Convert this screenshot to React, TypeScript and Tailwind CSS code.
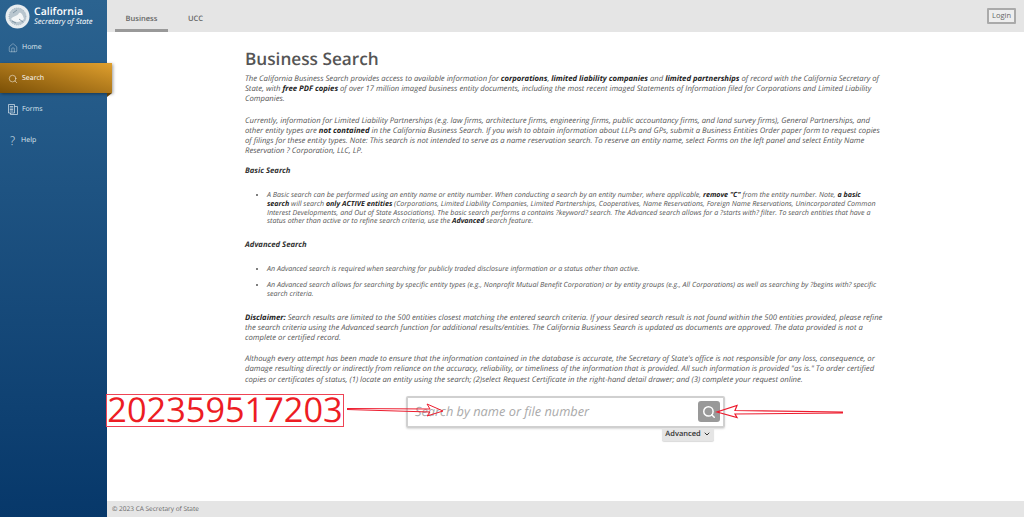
import { ChevronDown, Home, Search } from 'lucide-react'

const App = () => {
  return (
    <div className="relative flex h-[517px] w-[1024px] overflow-hidden bg-white font-['Open_Sans',sans-serif] text-[#555] antialiased [text-rendering:geometricPrecision]">
      {/* Sidebar */}
      <aside className="relative z-10 flex w-[107px] shrink-0 flex-col bg-gradient-to-b from-[#2b6390] to-[#07386a]">
        <div className="flex h-[32px] items-center gap-[4px] pl-[5px]">
          <Seal />
          <div className="pt-[2px] text-white">
            <div className="text-[10.5px] leading-[11px] font-semibold">California</div>
            <div className="text-[7.6px] leading-[9px] italic">Secretary of State</div>
          </div>
        </div>
        <nav className="flex flex-col text-[7px] text-[#dfe8ef]">
          <div className="flex h-[31px] items-center gap-[4px] pt-[1px] pl-[8px]">
            <Home size={10} strokeWidth={1} />
            <span className="pt-[1px]">Home</span>
          </div>
          <div className="relative flex h-[30px] w-[112px] items-center gap-[4px] bg-gradient-to-tr from-[#7b5006] to-[#e0a02e] pt-[1px] pl-[8px] text-white shadow-[1px_1px_3px_rgba(0,0,0,0.4)]">
            <Search size={10} strokeWidth={1.2} />
            <span className="pt-[1px]">Search</span>
            <div className="absolute top-full right-0 h-0 w-0 border-t-[4px] border-r-[5px] border-t-[#5e3d05] border-r-transparent" />
          </div>
          <div className="flex h-[32px] items-center gap-[4px] pt-[1px] pl-[8px]">
            <FormsIcon />
            <span className="pt-[1px]">Forms</span>
          </div>
          <div className="flex h-[30px] items-center gap-[6px] pt-[1px] pl-[10px]">
            <span className="text-[12px] font-light">?</span>
            <span className="pt-[1px]">Help</span>
          </div>
        </nav>
      </aside>

      {/* Main column */}
      <div className="flex min-w-0 flex-1 flex-col">
        <header className="flex h-[32px] items-stretch justify-between bg-[#e5e5e5] pr-[8px] text-[7.5px] font-semibold text-[#666]">
          <div className="ml-[8px] flex">
            <div className="flex w-[53px] items-center justify-center border-b-[3px] border-[#999] pt-[10px]">Business</div>
            <div className="ml-[20px] flex items-center pt-[8px]">UCC</div>
          </div>
          <div className="flex items-center">
            <button className="h-[16px] w-[29px] rounded-[1px] border-2 border-[#aaa] bg-[#eee] text-[7.5px] leading-none font-normal text-[#666]">Login</button>
          </div>
        </header>

        <main className="flex-1 pl-[138px]">
          <div className="w-[640px] pt-[16px]">
            <h1 className="text-[17.2px] leading-[24px] font-semibold text-[#555]">Business Search</h1>
            <p className="mt-[2px] text-[7.7px] leading-[10.2px] italic">
              The California Business Search provides access to available information for <b className="text-[#222]">corporations</b>, <b className="text-[#222]">limited liability companies</b> and <b className="text-[#222]">limited partnerships</b> of record with the California Secretary of State, with <b className="text-[#222]">free PDF copies</b> of over 17 million imaged business entity documents, including the most recent imaged Statements of Information filed for Corporations and Limited Liability Companies.
            </p>
            <p className="mt-[11px] text-[7.7px] leading-[10.2px] italic">
              Currently, information for Limited Liability Partnerships (e.g. law firms, architecture firms, engineering firms, public accountancy firms, and land survey firms), General Partnerships, and other entity types are <b className="text-[#222]">not contained</b> in the California Business Search. If you wish to obtain information about LLPs and GPs, submit a Business Entities Order paper form to request copies of filings for these entity types. Note: This search is not intended to serve as a name reservation search. To reserve an entity name, select Forms on the left panel and select Entity Name Reservation ? Corporation, LLC, LP.
            </p>
            <h2 className="mt-[10px] text-[7.7px] leading-[11px] font-bold text-[#333] italic">Basic Search</h2>
            <ul className="mt-[14px] list-disc pr-[3px] pl-[22px] text-[7.1px] leading-[8.6px] italic">
              <li>
                A Basic search can be performed using an entity name or entity number. When conducting a search by an entity number, where applicable, <b className="text-[#222]">remove "C"</b> from the entity number. Note, <b className="text-[#222]">a basic search</b> will search <b className="text-[#222]">only ACTIVE entities</b> (Corporations, Limited Liability Companies, Limited Partnerships, Cooperatives, Name Reservations, Foreign Name Reservations, Unincorporated Common Interest Developments, and Out of State Associations). The basic search performs a contains ?keyword? search. The Advanced search allows for a ?starts with? filter. To search entities that have a status other than active or to refine search criteria, use the <b className="text-[#222]">Advanced</b> search feature.
              </li>
            </ul>
            <h2 className="mt-[14px] text-[7.7px] leading-[11px] font-bold text-[#333] italic">Advanced Search</h2>
            <ul className="mt-[14px] list-disc pr-[3px] pl-[22px] text-[7.1px] leading-[8.6px] italic">
              <li>An Advanced search is required when searching for publicly traded disclosure information or a status other than active.</li>
              <li className="mt-[8px]">An Advanced search allows for searching by specific entity types (e.g., Nonprofit Mutual Benefit Corporation) or by entity groups (e.g., All Corporations) as well as searching by ?begins with? specific search criteria.</li>
            </ul>
            <p className="mt-[14px] text-[7.7px] leading-[10.2px] italic">
              <b className="text-[#222]">Disclaimer:</b> Search results are limited to the 500 entities closest matching the entered search criteria. If your desired search result is not found within the 500 entities provided, please refine the search criteria using the Advanced search function for additional results/entities. The California Business Search is updated as documents are approved. The data provided is not a complete or certified record.
            </p>
            <p className="mt-[11px] text-[7.7px] leading-[10.2px] italic">
              Although every attempt has been made to ensure that the information contained in the database is accurate, the Secretary of State's office is not responsible for any loss, consequence, or damage resulting directly or indirectly from reliance on the accuracy, reliability, or timeliness of the information that is provided. All such information is provided "as is." To order certified copies or certificates of status, (1) locate an entity using the search; (2)select Request Certificate in the right-hand detail drawer; and (3) complete your request online.
            </p>
          </div>

          {/* Search box */}
          <div className="mt-[11px] ml-[161px] w-[319px]">
            <div className="flex h-[32px] items-center justify-between rounded-[2px] border-2 border-[#d0d0d0] pr-[3px] pl-[7px] shadow-[0_1px_2px_rgba(0,0,0,0.15)]">
              <span className="text-[12.8px] text-[#aaa] italic">Search by name or file number</span>
              <div className="flex h-[21px] w-[22px] items-center justify-center rounded-[3px] bg-[#999]">
                <Search size={14} strokeWidth={2.5} className="text-white" />
              </div>
            </div>
            <div className="ml-[256px] flex h-[13px] w-[52px] items-center justify-center gap-[2px] rounded-b-[2px] bg-[#e5e5e5] text-[7.5px] font-semibold text-[#333] shadow-[0_1px_1px_rgba(0,0,0,0.15)]">
              Advanced
              <ChevronDown size={8} strokeWidth={3} />
            </div>
          </div>
        </main>

        <footer className="flex h-[16px] items-center bg-[#e5e5e5] pl-[5px] text-[6.5px] text-[#666]">© 2023 CA Secretary of State</footer>
      </div>

      {/* Red annotations pasted on top of the page */}
      <div className="absolute top-[394px] left-[106px] z-20 flex h-[33px] w-[238px] items-center justify-center border border-[#ee4455] bg-white text-[34.3px] leading-none text-[#ed1c24]">
        202359517203
      </div>
      <svg className="absolute top-[395px] left-[345px] z-20" width="505" height="35" viewBox="0 0 505 35" fill="none" stroke="#ed1c2e">
        <path d="M2 13.5 L85 14 L82 9 L98 16 L82 21 L85 17 L2 14.5" strokeWidth="1" />
        <path d="M498 17 L390 15.5 L392 10.5 L372 17 L392 22.5 L390 19 L498 18" strokeWidth="1.2" />
      </svg>
    </div>
  )
}

const FormsIcon = () => (
  <svg width="10" height="11" viewBox="0 0 10 11" fill="none" stroke="currentColor" strokeWidth="0.7" className="shrink-0">
    <path d="M0.5 0.5 H6.5 V9 H0.5 Z" />
    <path d="M6.5 2.5 H9.5 V10.5 H2.5 V9" />
    <path d="M1.8 2.5 H5.2 M1.8 4 H5.2 M1.8 5.5 H5.2 M1.8 7 H5.2" />
  </svg>
)

const Seal = () => (
  <svg width="25" height="25" viewBox="0 0 25 25" className="shrink-0">
    <circle cx="12.5" cy="12.5" r="12" fill="#e8edf0" />
    <circle cx="12.5" cy="12.5" r="8.5" fill="#b9c6cf" stroke="#7f97a8" strokeWidth="0.6" strokeDasharray="1 1" />
    <path d="M6 15 C9 11 12 13 14 9 C16 8 18 11 19 15 C15 19 9 19 6 15 Z" fill="#f4f6f7" />
    <path d="M8 9 L12 6 M14 15 L18 18 M7 17 L11 19" stroke="#6f8797" strokeWidth="0.8" />
  </svg>
)

export default App
